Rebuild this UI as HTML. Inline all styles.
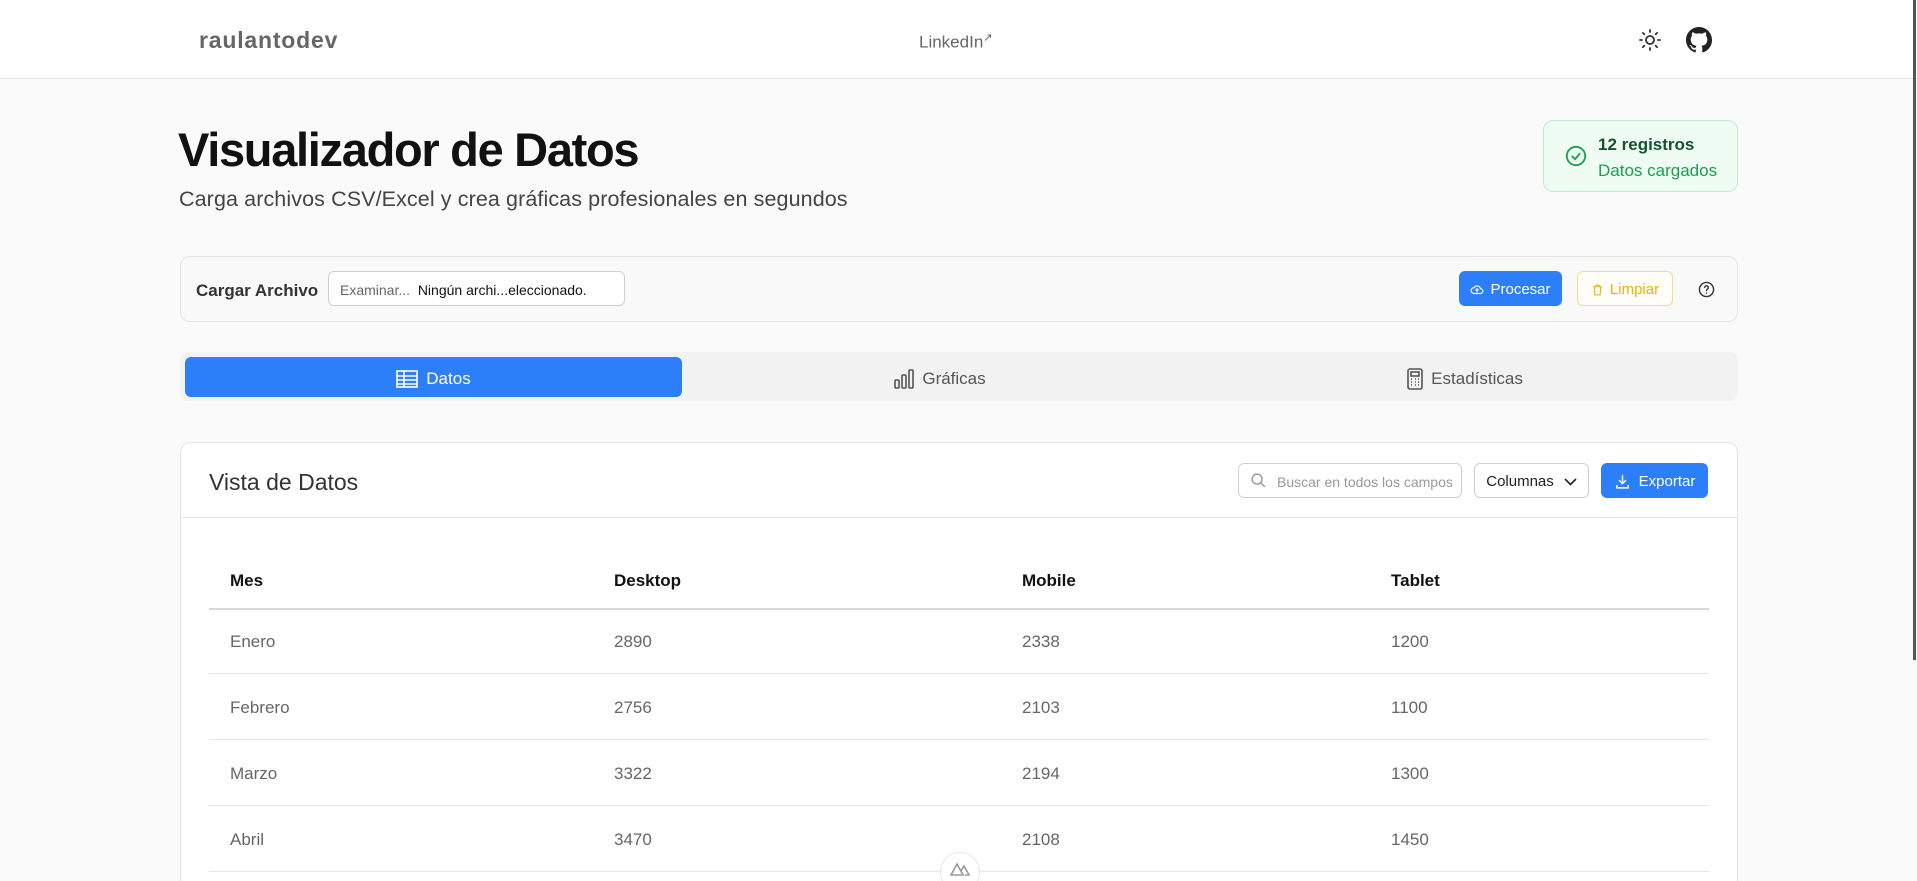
<!DOCTYPE html>
<html><head><meta charset="utf-8"><style>
*{box-sizing:border-box;margin:0;padding:0}
html,body{width:1917px;height:881px;overflow:hidden}
body{background:#fafafa;font-family:"Liberation Sans",sans-serif;color:#222}
#w{position:relative;width:1917px;height:881px;overflow:hidden}
.hdr{position:absolute;left:0;top:0;width:1917px;height:79px;background:#fff;border-bottom:1px solid #e3e3e3}
.abs{position:absolute}
.card{position:absolute;border:1px solid #e4e4e4;border-radius:10px}
.btn{position:absolute;border-radius:6px;font-size:15px;display:flex;align-items:center;justify-content:center;gap:6px}
.th{position:absolute;font-size:17px;font-weight:bold;color:#111;top:571px}
.td{position:absolute;font-size:17px;color:#666}
.line{position:absolute;left:209px;width:1500px;height:1px;background:#e6e6e6}
</style></head><body><div id="w">
<div class="hdr"></div>
<div class="abs" style="left:199px;top:27px;font-size:23px;font-weight:bold;color:#666;letter-spacing:0.8px">raulantodev</div>
<div class="abs" style="left:919px;top:31px;font-size:17px;color:#666">LinkedIn<sup style="font-size:11px">↗</sup></div>
<svg class="abs" style="left:1638px;top:28px" width="24" height="24" viewBox="0 0 24 24" fill="none" stroke="#333" stroke-width="1.8" stroke-linecap="round"><circle cx="12" cy="12" r="4"/><path d="M12 2v2M12 20v2M2 12h2M20 12h2M4.9 4.9l1.4 1.4M17.7 17.7l1.4 1.4M4.9 19.1l1.4-1.4M17.7 6.3l1.4-1.4"/></svg>
<svg class="abs" style="left:1686px;top:27px" width="26" height="26" viewBox="0 0 16 16"><path fill="#222" d="M8 0C3.58 0 0 3.58 0 8c0 3.540 2.29 6.53 5.47 7.59.4.07.55-.17.55-.38v-1.33c-2.23.48-2.7-1.07-2.7-1.07-.36-.92-.89-1.170-.89-1.17-.73-.5.06-.49.06-.49.8.06 1.23.83 1.23.83.72 1.22 1.87.87 2.330.66.07-.52.28-.87.51-1.07-1.78-.2-3.64-.89-3.64-3.95 0-.87.31-1.59.82-2.15-.08-.2-.36-1.02.08-2.12 0 0 .67-.21 2.2.82.64-.18 1.32-.27 2-.27s1.36.09 2 .27c1.53-1.04 2.2-.82 2.2-.82.44 1.1.16 1.92.08 2.12.51.56.82 1.27.82 2.15 0 3.07-1.87 3.75-3.65 3.95.29.25.54.73.54 1.48v2.2c0 .21.15.46.55.38A8.01 8.01 0 0016 8c0-4.42-3.58-8-8-8z"/></svg>
<div class="abs" style="right:1px;top:0;width:3px;height:660px;background:#555"></div>

<div class="abs" style="left:178px;top:122px;font-size:47px;font-weight:bold;color:#111;letter-spacing:-1.3px">Visualizador de Datos</div>
<div class="abs" style="left:179px;top:187px;font-size:21.5px;color:#444;letter-spacing:0.1px">Carga archivos CSV/Excel y crea gráficas profesionales en segundos</div>

<div class="card" style="left:1543px;top:120px;width:195px;height:72px;background:#effcf3;border-color:#bdeecb"></div>
<svg class="abs" style="left:1565px;top:145px" width="22" height="22" viewBox="0 0 24 24" fill="none" stroke="#16a34a" stroke-width="2" stroke-linecap="round"><circle cx="12" cy="12" r="10"/><path d="M8 12.5l3 3 5-6"/></svg>
<div class="abs" style="left:1598px;top:135px;font-size:17px;font-weight:bold;color:#14532d">12 registros</div>
<div class="abs" style="left:1598px;top:161px;font-size:17px;color:#16a34a">Datos cargados</div>

<div class="card" style="left:180px;top:256px;width:1558px;height:66px;background:#f9f9f9"></div>
<div class="abs" style="left:196px;top:281px;font-size:17px;font-weight:bold;color:#333">Cargar Archivo</div>
<div class="abs" style="left:328px;top:271px;width:297px;height:35px;border:1px solid #cfcfcf;border-radius:6px;background:#fff;font-size:14px;padding:10px 11px;white-space:nowrap"><span style="color:#666">Examinar...</span>&nbsp;&nbsp;<span style="color:#111">Ningún archi...eleccionado.</span></div>
<div class="btn" style="left:1459px;top:271px;width:103px;height:35px;background:#2d7ff9;color:#fff;padding-top:2px"><svg width="14" height="14" viewBox="0 0 24 24" fill="none" stroke="#fff" stroke-width="2"><path d="M7 18a5 5 0 010-10 6 6 0 0111 2 4 4 0 010 8H7zM12 16v-6M9.5 12.5L12 10l2.5 2.5"/></svg>Procesar</div>
<div class="btn" style="left:1577px;top:271px;width:96px;height:35px;border:1px solid #fcd98a;color:#eab308;background:#fffdf7;padding-top:2px"><svg width="13" height="14" viewBox="0 0 24 24" fill="none" stroke="#eab308" stroke-width="2"><path d="M4 6h16M9 6V3h6v3M6 6l1 15h10l1-15"/></svg>Limpiar</div>
<svg class="abs" style="left:1698px;top:281px" width="17" height="17" viewBox="0 0 24 24" fill="none" stroke="#333" stroke-width="2" stroke-linecap="round"><circle cx="12" cy="12" r="10"/><path d="M9.5 9a2.5 2.5 0 015 .5c0 1.7-2.5 2-2.5 4M12 17h.01"/></svg>

<div class="abs" style="left:180px;top:352px;width:1558px;height:49px;background:#f2f2f2;border-radius:8px"></div>
<div class="abs" style="left:185px;top:357px;width:497px;height:40px;background:#2d7ff9;border-radius:6px;display:flex;align-items:center;justify-content:center;gap:8px;color:#fff;font-size:17px;padding-top:3px"><svg width="22" height="18" viewBox="0 0 22 18" fill="none" stroke="#fff" stroke-width="1.6"><rect x="1" y="1" width="20" height="16"/><path d="M1 6h20M1 10h20M1 14h20M8 1v16"/></svg>Datos</div>
<div class="abs" style="left:850px;top:357px;width:180px;height:40px;display:flex;align-items:center;justify-content:center;gap:8px;color:#555;font-size:17px;padding-top:3px"><svg width="20" height="20" viewBox="0 0 20 20" fill="none" stroke="#555" stroke-width="1.6"><rect x="1" y="11" width="4" height="8" rx="1"/><rect x="8" y="6" width="4" height="13" rx="1"/><rect x="15" y="1" width="4" height="18" rx="1"/></svg>Gráficas</div>
<div class="abs" style="left:1370px;top:357px;width:190px;height:40px;display:flex;align-items:center;justify-content:center;gap:8px;color:#555;font-size:17px;padding-top:3px"><svg width="16" height="22" viewBox="0 0 16 22" fill="none" stroke="#555" stroke-width="1.6"><rect x="1" y="1" width="14" height="20" rx="2"/><rect x="4" y="4" width="8" height="4"/><path d="M4 11h1M8 11h1M11 11h1M4 14h1M8 14h1M11 14h1M4 17h1M8 17h1M11 17h1"/></svg>Estadísticas</div>

<div class="card" style="left:180px;top:442px;width:1558px;height:460px;background:#fff"></div>
<div class="abs" style="left:180px;top:517px;width:1558px;height:1px;background:#e4e4e4"></div>
<div class="abs" style="left:209px;top:469px;font-size:23px;color:#333">Vista de Datos</div>
<div class="abs" style="left:1238px;top:463px;width:224px;height:35px;border:1px solid #d0d0d0;border-radius:6px;font-size:14px;color:#999;padding:10px 0 0 38px;white-space:nowrap;overflow:hidden">Buscar en todos los campos</div>
<svg class="abs" style="left:1250px;top:472px" width="17" height="17" viewBox="0 0 24 24" fill="none" stroke="#999" stroke-width="2"><circle cx="10" cy="10" r="7"/><path d="M15 15l6 6"/></svg>
<div class="btn" style="left:1474px;top:463px;width:115px;height:35px;border:1px solid #d0d0d0;color:#222;font-size:15px;gap:10px;padding-top:2px">Columnas<svg width="13" height="8" viewBox="0 0 13 8" fill="none" stroke="#222" stroke-width="1.6"><path d="M1 1l5.5 5.5L12 1"/></svg></div>
<div class="btn" style="left:1601px;top:463px;width:107px;height:35px;background:#2d7ff9;color:#fff;gap:8px;padding-top:2px"><svg width="17" height="17" viewBox="0 0 24 24" fill="none" stroke="#fff" stroke-width="2"><path d="M12 3v12M7 10l5 5 5-5M4 17v4h16v-4"/></svg>Exportar</div>

<div class="th" style="left:230px">Mes</div><div class="th" style="left:614px">Desktop</div><div class="th" style="left:1022px">Mobile</div><div class="th" style="left:1391px">Tablet</div>
<div class="line" style="top:608px;height:2px;background:#d8d8d8"></div>
<div class="td" style="left:230px;top:632px">Enero</div><div class="td" style="left:614px;top:632px">2890</div><div class="td" style="left:1022px;top:632px">2338</div><div class="td" style="left:1391px;top:632px">1200</div>
<div class="line" style="top:673px"></div>
<div class="td" style="left:230px;top:698px">Febrero</div><div class="td" style="left:614px;top:698px">2756</div><div class="td" style="left:1022px;top:698px">2103</div><div class="td" style="left:1391px;top:698px">1100</div>
<div class="line" style="top:739px"></div>
<div class="td" style="left:230px;top:764px">Marzo</div><div class="td" style="left:614px;top:764px">3322</div><div class="td" style="left:1022px;top:764px">2194</div><div class="td" style="left:1391px;top:764px">1300</div>
<div class="line" style="top:805px"></div>
<div class="td" style="left:230px;top:830px">Abril</div><div class="td" style="left:614px;top:830px">3470</div><div class="td" style="left:1022px;top:830px">2108</div><div class="td" style="left:1391px;top:830px">1450</div>
<div class="line" style="top:871px"></div>
<div class="abs" style="left:940px;top:852px;width:40px;height:40px;border-radius:50%;background:#fff;border:1px solid #e6e6e6"></div>
<svg class="abs" style="left:950px;top:862px" width="20" height="14" viewBox="0 0 20 14" fill="none" stroke="#999" stroke-width="1.6"><path d="M1 13L7 2l6 11H1zM11 9l3-5 5 9h-4"/></svg>
</div></body></html>
